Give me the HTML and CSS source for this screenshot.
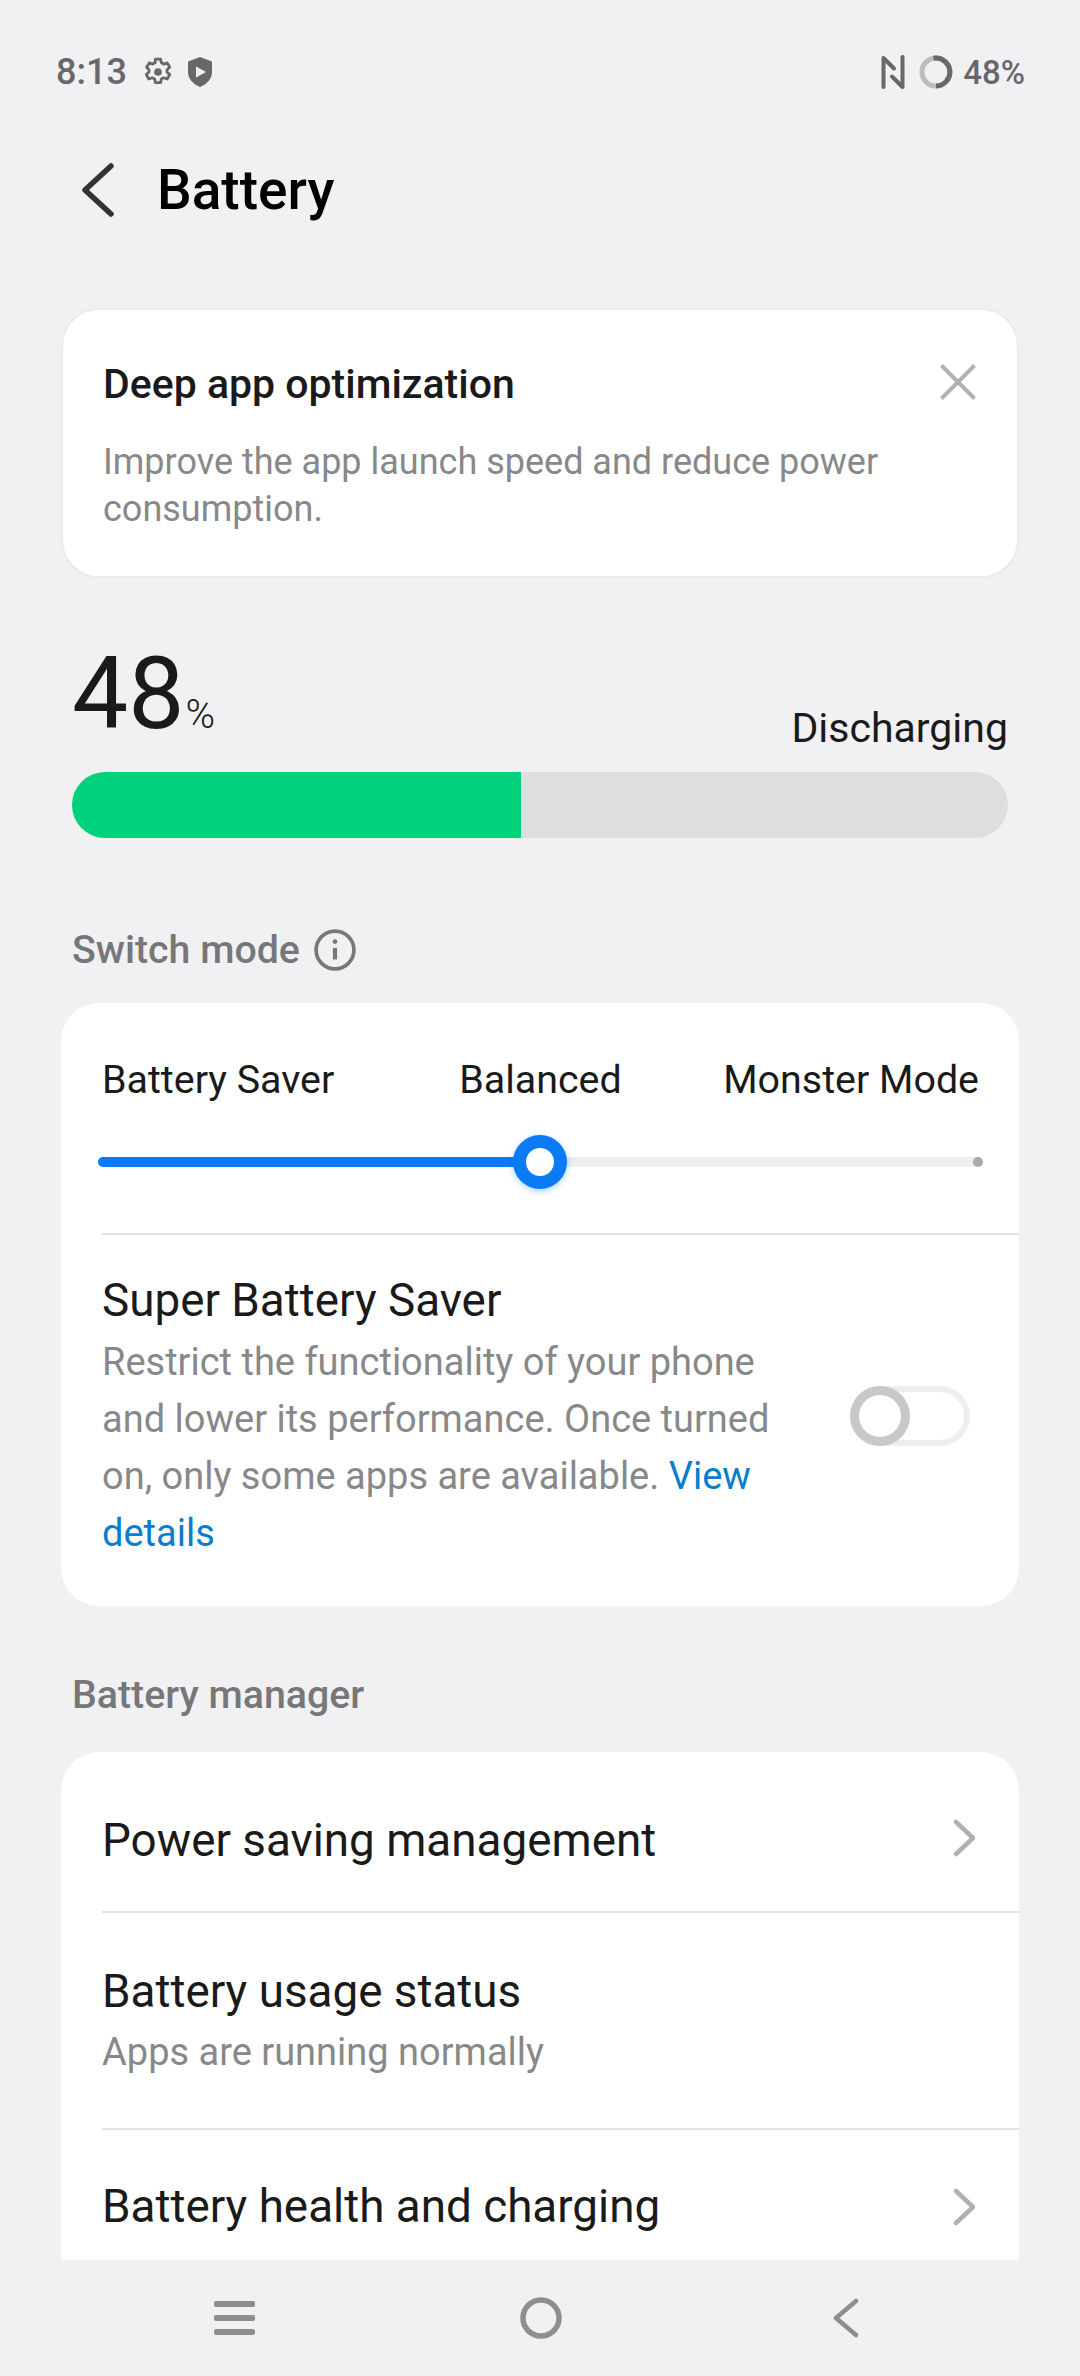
FILE: index.html
```html
<!DOCTYPE html>
<html lang="en">
<head>
    <meta charset="UTF-8" />
    <meta name="viewport" content="width=device-width, initial-scale=1.0"/>
    <title>Battery</title>
    <link rel="stylesheet" href="styles.css">
</head>
<body>
    <div class="status-bar">
        <div class="status-left">
            <span class="clock">8:13</span>
            <svg class="ic-gear" width="30" height="30" viewBox="0 0 28 28" fill="none" stroke="#68686a" stroke-width="2.600" stroke-linejoin="round">
                <path d="M11.600 2h4.800l.7 3.400 2.200 1.200 3.300-1.100 2.400 4.100-2.600 2.300v2.200l2.600 2.300-2.400 4.100-3.300-1.100-2.200 1.200-.7 3.400h-4.800l-.7-3.400-2.200-1.200-3.300 1.100-2.400-4.100 2.600-2.300v-2.200L3.400 9.600l2.400-4.100 3.300 1.100 2.200-1.200z"/>
                <circle cx="14" cy="14" r="3.600" fill="#68686a" stroke="none"/>
            </svg>
            <svg class="ic-shield" width="24" height="30" viewBox="0 0 24 30">
                <path d="M12 0 24 4.500V15c0 7-5 12-12 15C5 27 0 22 0 15V4.500z" fill="#68686a"/>
                <path d="M8 9.500 18 15 8 20.500z" fill="#f1f1f4"/>
            </svg>
        </div>
        <div class="status-right">
            <svg width="24" height="34" viewBox="0 0 24 34" fill="none" stroke="#68686a" stroke-width="4" stroke-linecap="round" stroke-linejoin="round">
                <path d="M2.500 32V3L13 13.500M21.500 2v30L11 21.500"/>
            </svg>
            <svg class="ic-level" width="34" height="34" viewBox="0 0 34 34" fill="none" stroke-width="5">
                <circle cx="17" cy="17" r="14" stroke="#bdbdbf"/>
                <path d="M14.500 3.200A14 14 0 1 1 17 31" stroke="#68686a"/>
            </svg>
            <span class="level">48%</span>
        </div>
    </div>

    <header class="title-bar">
        <svg width="34" height="54" viewBox="0 0 34 54" fill="none" stroke="#333335" stroke-width="5.500" stroke-linecap="round" stroke-linejoin="round">
            <path d="M30 3 4 27l26 24"/>
        </svg>
        <h1>Battery</h1>
    </header>

    <main class="content">
        <section class="tip-card">
            <div class="tip-head">
                <h2>Deep app optimization</h2>
                <svg class="tip-close" width="36" height="36" viewBox="0 0 36 36" stroke="#b1b1b1" stroke-width="4">
                    <path d="M1.500 1.500l33 33M34.500 1.500l-33 33"/>
                </svg>
            </div>
            <p>Improve the app launch speed and reduce power consumption.</p>
        </section>

        <section class="level-box">
            <div class="level-head">
                <div class="level-num">48<span>%</span></div>
                <div class="level-state">Discharging</div>
            </div>
            <div class="level-bar"><div class="level-fill" style="width: 48%"></div></div>
        </section>

        <h3 class="section-title"><span>Switch mode</span>
            <svg width="42" height="42" viewBox="0 0 40 40" fill="none" stroke="#77777a">
                <circle cx="20" cy="20" r="18" stroke-width="3.500"/>
                <path d="M20 18v11" stroke-width="4"/>
                <circle cx="20" cy="12" r="2.300" fill="#77777a" stroke="none"/>
            </svg>
        </h3>
        <section class="card">
            <div class="mode-labels">
                <span>Battery Saver</span>
                <span>Balanced</span>
                <span class="mode-last">Monster Mode</span>
            </div>
            <div class="slider">
                <div class="slider-track"></div>
                <div class="slider-fill"></div>
                <div class="slider-end"></div>
                <div class="slider-knob"></div>
            </div>
            <div class="row row-saver">
                <div class="row-text">
                    <div class="row-name">Super Battery Saver</div>
                    <div class="row-desc">Restrict the functionality of your phone and lower its performance. Once turned on, only some apps are available. <a href="#">View</a> <a href="#">details</a></div>
                </div>
                <div class="toggle"><div class="toggle-knob"></div></div>
            </div>
        </section>

        <h3 class="section-title">Battery manager</h3>
        <section class="card card-list">
            <div class="row row-link row-first">
                <div class="row-name">Power saving management</div>
                <svg class="chev" width="22" height="38" viewBox="0 0 22 38" fill="none" stroke="#b0b0b0" stroke-width="4.500" stroke-linecap="round" stroke-linejoin="round">
                    <path d="M3 3l17 16L3 35"/>
                </svg>
            </div>
            <div class="row row-status">
                <div class="row-name">Battery usage status</div>
                <div class="row-desc">Apps are running normally</div>
            </div>
            <div class="row row-link row-last">
                <div class="row-name">Battery health and charging</div>
                <svg class="chev" width="22" height="38" viewBox="0 0 22 38" fill="none" stroke="#b0b0b0" stroke-width="4.500" stroke-linecap="round" stroke-linejoin="round">
                    <path d="M3 3l17 16L3 35"/>
                </svg>
            </div>
        </section>
    </main>

    <nav class="nav-bar">
        <svg width="41" height="34" viewBox="0 0 41 34" fill="#8e8e90">
            <rect y="0" width="41" height="6" rx="2"/>
            <rect y="14" width="41" height="6" rx="2"/>
            <rect y="28" width="41" height="6" rx="2"/>
        </svg>
        <svg class="nav-home" width="42" height="42" viewBox="0 0 42 42" fill="none" stroke="#8e8e90" stroke-width="5.500">
            <circle cx="21" cy="21" r="18"/>
        </svg>
        <svg class="nav-back" width="26" height="40" viewBox="0 0 26 40" fill="none" stroke="#8e8e90" stroke-width="4.500" stroke-linecap="round" stroke-linejoin="round">
            <path d="M23 3 3 20l20 17"/>
        </svg>
    </nav>
</body>
</html>
```

FILE: styles.css
```css
* {
    margin: 0;
    padding: 0;
    box-sizing: border-box;
}

body {
    width: 1080px;
    height: 2376px;
    overflow: hidden;
    font-family: Roboto, sans-serif;
    background: #f1f1f4;
    color: #1a1a1a;
}

.status-bar {
    display: flex;
    justify-content: space-between;
    align-items: center;
    height: 72px;
    margin-top: 36px;
    padding: 0 55px 0 56px;
    color: #68686a;
    font-weight: 500;
}

.status-left, .status-right {
    display: flex;
    align-items: center;
}

.clock {
    font-size: 36px;
}

.ic-gear {
    margin-left: 16px;
}

.ic-shield {
    margin-left: 15px;
}

.ic-level {
    margin-left: 14px;
}

.level {
    margin-left: 10px;
    font-size: 33px;
}

.title-bar {
    display: flex;
    align-items: center;
    height: 72px;
    margin-top: 46px;
    padding-left: 81px;
}

.title-bar h1 {
    margin-left: 42px;
    font-size: 55px;
    font-weight: 500;
    color: #000;
}

.content {
    height: 2034px;
    padding: 82px 61px 0;
    overflow: hidden;
}

.tip-card {
    height: 270px;
    padding: 50px 40px 0;
    background: #fff;
    border: 2px solid #ebebed;
    border-radius: 38px;
}

.tip-head {
    display: flex;
    justify-content: space-between;
    align-items: center;
    padding-right: 1px;
}

.tip-head h2 {
    font-size: 41px;
    font-weight: 500;
}

.tip-close {
    margin-bottom: 4px;
}

.tip-card p {
    margin-top: 31px;
    font-size: 36px;
    line-height: 47px;
    color: #88888a;
}

.level-box {
    padding: 0 11px;
}

.level-head {
    display: flex;
    justify-content: space-between;
    align-items: flex-end;
    height: 187px;
}

.level-num {
    font-size: 100px;
    line-height: 100px;
}

.level-num span {
    margin-left: 1px;
    font-size: 40px;
    font-weight: 300;
}

.level-state {
    padding-bottom: 13px;
    font-size: 41px;
}

.level-bar {
    height: 66px;
    margin-top: 7px;
    background: #dedee0;
    border-radius: 33px;
    overflow: hidden;
}

.level-fill {
    height: 100%;
    background: #00d27c;
}

.section-title {
    display: flex;
    align-items: center;
    gap: 14px;
    height: 46px;
    padding-left: 11px;
    font-size: 39.300px;
    font-weight: 500;
    color: #77777a;
}

.level-box + .section-title {
    margin-top: 89px;
}

.card + .section-title {
    margin-top: 66px;
}

.card {
    margin-top: 30px;
    background: #fff;
    border-radius: 38px;
}

.mode-labels {
    display: grid;
    grid-template-columns: 1fr auto 1fr;
    padding: 53px 40px 0 41px;
    font-size: 39.400px;
}

.mode-last {
    text-align: right;
}

.slider {
    position: relative;
    width: 885px;
    height: 54px;
    margin: 32px 0 0 37px;
}

.slider-track {
    position: absolute;
    top: 22px;
    left: 0;
    right: 0;
    height: 10px;
    background: #eeeeee;
    border-radius: 5px;
}

.slider-fill {
    position: absolute;
    top: 22px;
    left: 0;
    width: 442px;
    height: 10px;
    background: #0a7bf5;
    border-radius: 5px;
}

.slider-end {
    position: absolute;
    top: 22px;
    right: 0;
    width: 10px;
    height: 10px;
    background: #aaaaaa;
    border-radius: 50%;
}

.slider-knob {
    position: absolute;
    top: 0;
    left: 415px;
    width: 54px;
    height: 54px;
    background: #fff;
    border: 13px solid #0a7bf5;
    border-radius: 50%;
    box-shadow: 0 2px 6px rgba(10, 123, 245, 0.35);
}

.row {
    margin-left: 41px;
    border-top: 2px solid #e3e3e5;
}

.row-saver {
    display: flex;
    align-items: center;
    justify-content: space-between;
    margin-top: 44px;
    padding: 38px 49px 44px 0;
}

.row-text {
    width: 680px;
}

.row-name {
    font-size: 45.800px;
    line-height: 56px;
}

.row-desc {
    font-size: 38px;
    line-height: 57px;
    color: #88888a;
}

.row-saver .row-desc {
    margin-top: 5px;
}

.row-desc a {
    color: #0a7ecb;
    text-decoration: none;
}

.toggle {
    position: relative;
    width: 120px;
    height: 60px;
    margin-bottom: 4px;
    border: 6px solid #eeeeee;
    border-radius: 30px;
}

.toggle-knob {
    position: absolute;
    top: -6px;
    left: -6px;
    width: 60px;
    height: 60px;
    background: #fff;
    border: 9px solid #c8c8c8;
    border-radius: 50%;
}

.card-list {
    height: 700px;
    margin-top: 34px;
}

.row-link {
    display: flex;
    align-items: center;
    justify-content: space-between;
    height: 160px;
    padding-right: 44px;
}

.row-first {
    height: 159px;
    padding-top: 18px;
    border-top: 0;
}

.row-first .chev {
    margin-bottom: 6px;
}

.row-last {
    padding-bottom: 4px;
}

.row-status {
    height: 217px;
    padding-top: 51px;
}

.row-status .row-desc {
    margin-top: 7px;
    line-height: 50px;
}

.nav-bar {
    display: flex;
    align-items: center;
    height: 116px;
    padding-left: 214px;
}

.nav-home {
    margin-left: 265px;
}

.nav-back {
    margin-left: 271px;
}
```
